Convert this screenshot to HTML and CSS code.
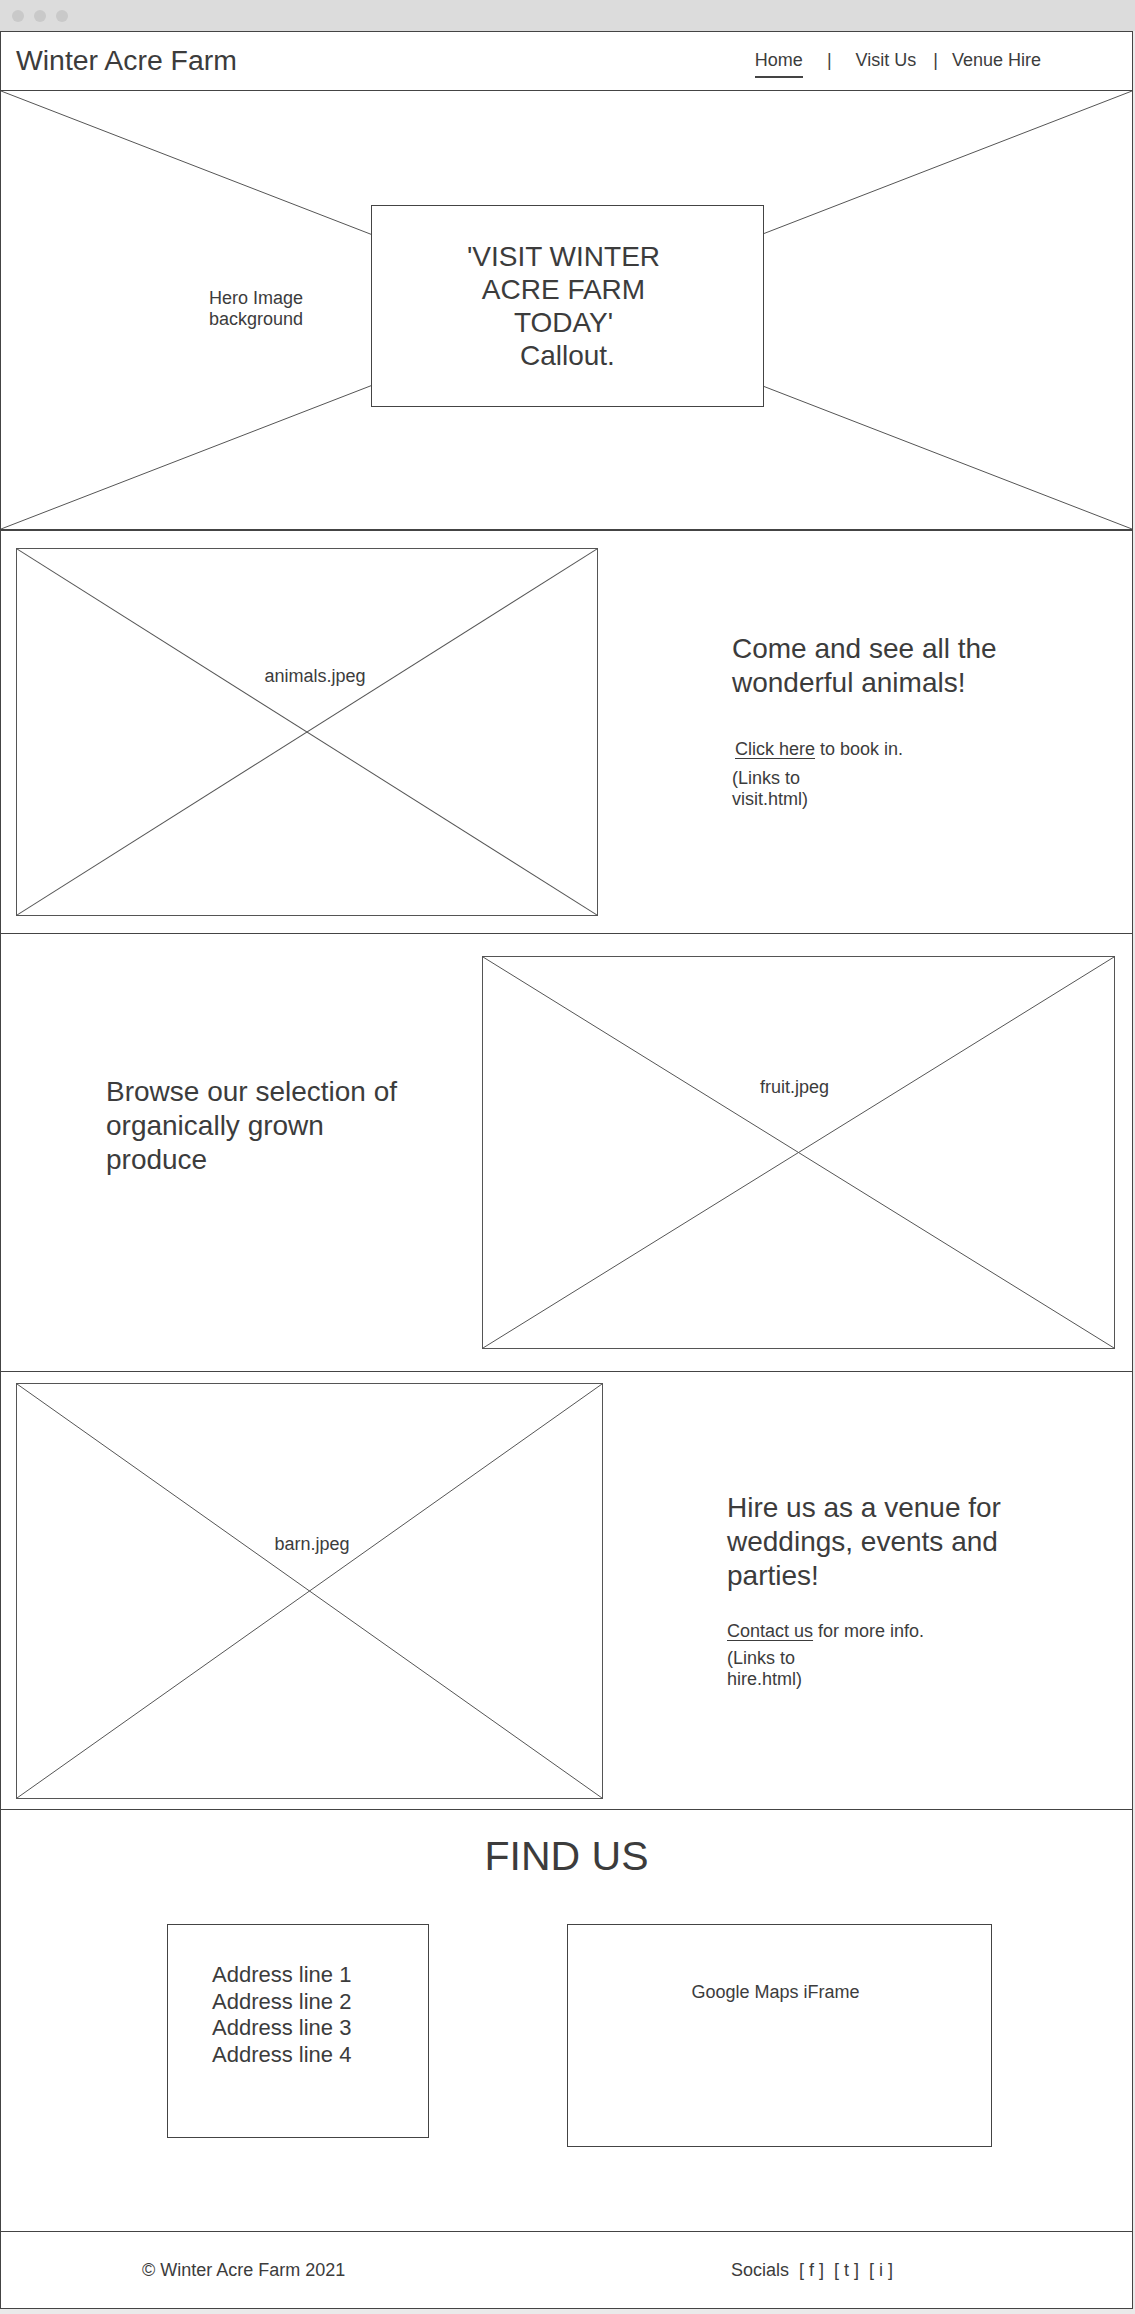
FILE: index.html
```html
<!DOCTYPE html>
<html lang="en">
<head>
  <meta charset="UTF-8" />
  <title>Winter Acre Farm - Wireframe</title>
  <link rel="stylesheet" href="styles.css">
</head>
<body>

  <div class="chrome">
    <span class="dot"></span>
    <span class="dot"></span>
    <span class="dot"></span>
  </div>

  <div class="frame">

    <header class="header">
      <div class="logo">Winter Acre Farm</div>
      <nav class="nav">
        <a href="#" class="active">Home</a>
        <span class="sep">|</span>
        <a href="#">Visit Us</a>
        <span class="sep sep-tight">|</span>
        <a href="#">Venue Hire</a>
      </nav>
    </header>

    <section class="hero">
      <svg class="cross" viewBox="0 0 100 100" preserveAspectRatio="none">
        <line x1="0" y1="0" x2="100" y2="100" />
        <line x1="100" y1="0" x2="0" y2="100" />
      </svg>
      <div class="hero-label">Hero Image<br>background</div>
      <div class="callout">
        <p>'VISIT WINTER<br>ACRE FARM<br>TODAY'<br>&nbsp;Callout.</p>
      </div>
    </section>

    <section class="row row-animals">
      <div class="placeholder ph-animals">
        <svg class="cross" viewBox="0 0 100 100" preserveAspectRatio="none">
          <line x1="0" y1="0" x2="100" y2="100" />
          <line x1="100" y1="0" x2="0" y2="100" />
        </svg>
        <span class="ph-label">animals.jpeg</span>
      </div>
      <div class="blurb blurb-animals">
        <h2>Come and see all the wonderful animals!</h2>
        <p class="cta"><a href="#">Click here</a> to book in.</p>
        <p class="note">(Links to<br>visit.html)</p>
      </div>
    </section>

    <section class="row row-fruit">
      <div class="blurb blurb-fruit">
        <h2>Browse our selection of organically grown produce</h2>
      </div>
      <div class="placeholder ph-fruit">
        <svg class="cross" viewBox="0 0 100 100" preserveAspectRatio="none">
          <line x1="0" y1="0" x2="100" y2="100" />
          <line x1="100" y1="0" x2="0" y2="100" />
        </svg>
        <span class="ph-label">fruit.jpeg</span>
      </div>
    </section>

    <section class="row row-barn">
      <div class="placeholder ph-barn">
        <svg class="cross" viewBox="0 0 100 100" preserveAspectRatio="none">
          <line x1="0" y1="0" x2="100" y2="100" />
          <line x1="100" y1="0" x2="0" y2="100" />
        </svg>
        <span class="ph-label">barn.jpeg</span>
      </div>
      <div class="blurb blurb-barn">
        <h2>Hire us as a venue for weddings, events and parties!</h2>
        <p class="cta"><a href="#">Contact us</a> for more info.</p>
        <p class="note">(Links to<br>hire.html)</p>
      </div>
    </section>

    <section class="find">
      <h1>FIND US</h1>
      <div class="find-row">
        <div class="address">
          Address line 1<br>
          Address line 2<br>
          Address line 3<br>
          Address line 4
        </div>
        <div class="map">Google Maps iFrame</div>
      </div>
    </section>

    <footer class="footer">
      <div class="copy">&copy; Winter Acre Farm 2021</div>
      <div class="socials">Socials &nbsp;[ f ] &nbsp;[ t ] &nbsp;[ i ]</div>
    </footer>

  </div>

</body>
</html>
```

FILE: styles.css
```css
body, html {
  margin: 0; padding: 0;
  background: #eaeaea;
  font-family: "Liberation Sans", Arial, sans-serif;
  color: #3c3c3c;
}
.chrome {
  height: 31px;
  background: #dcdcdc;
  display: flex;
  align-items: center;
  gap: 10px;
  padding-left: 12px;
  box-sizing: border-box;
}
.dot {
  width: 12px; height: 12px;
  border-radius: 50%;
  background: #c9c9c9;
}
.frame {
  width: 1133px;
  height: 2278px;
  box-sizing: border-box;
  border: 1px solid #444;
  background: white;
}
.header {
  height: 59px;
  box-sizing: border-box;
  border-bottom: 1px solid #444;
  display: flex;
  align-items: flex-start;
  justify-content: space-between;
  padding: 0 91px 0 15px;
}
.logo {
  font-size: 28.4px;
  line-height: 32px;
  margin-top: 12px;
}
.nav {
  display: flex;
  align-items: flex-start;
  margin-top: 18px;
  font-size: 18px;
  line-height: 21px;
}
.nav a {
  color: #3c3c3c;
  text-decoration: none;
}
.nav a.active {
  padding-bottom: 5px;
  border-bottom: 2px solid #444;
}
.sep { margin: 0 24px; }
.sep-tight { margin: 0 14px 0 17px; }

.cross {
  position: absolute;
  top: 0; left: 0;
  width: 100%; height: 100%;
}
.cross line {
  stroke: #555;
  stroke-width: 1;
  vector-effect: non-scaling-stroke;
}

.hero {
  position: relative;
  height: 440px;
  box-sizing: border-box;
  border-bottom: 2px solid #444;
  display: flex;
  align-items: center;
  padding: 0 0 8px 208px;
}
.hero-label {
  position: relative;
  width: 162px;
  margin-top: 6px;
  font-size: 18px;
  line-height: 21px;
}
.callout {
  position: relative;
  width: 393px;
  height: 202px;
  box-sizing: border-box;
  border: 1px solid #444;
  background: white;
  display: flex;
  align-items: center;
  justify-content: center;
}
.callout p {
  margin: 0;
  padding-right: 8px;
  text-align: center;
  font-size: 28px;
  line-height: 33px;
}

.row {
  display: flex;
  align-items: flex-start;
  box-sizing: border-box;
  border-bottom: 1px solid #444;
}
.row-animals { height: 403px; padding: 17px 0 0 15px; }
.row-fruit { height: 438px; padding: 22px 17px 0 105px; }
.row-barn { height: 438px; padding: 11px 0 0 15px; }

.placeholder {
  position: relative;
  box-sizing: border-box;
  border: 1px solid #555;
  text-align: center;
}
.ph-label {
  position: relative;
  display: block;
  font-size: 18px;
  line-height: 21px;
}
.ph-animals { width: 582px; height: 368px; padding: 117px 0 0 16px; }
.ph-fruit { width: 633px; height: 393px; padding: 120px 8px 0 0; margin-left: auto; }
.ph-barn { width: 587px; height: 416px; padding: 150px 0 0 5px; }

.blurb h2 {
  margin: 0;
  font-weight: normal;
  font-size: 28px;
  line-height: 34px;
}
.blurb p {
  margin: 0;
  font-size: 18px;
  line-height: 21px;
}
.blurb a {
  color: #3c3c3c;
  text-decoration: underline;
  text-underline-offset: 3px;
}
.blurb-animals { width: 300px; margin: 84px 0 0 134px; }
.blurb-animals .cta { margin: 39px 0 0 3px; }
.blurb-animals .note { margin-top: 8px; }
.blurb-fruit { width: 300px; margin-top: 119px; }
.blurb-barn { width: 300px; margin: 108px 0 0 124px; }
.blurb-barn .cta { margin-top: 28px; }
.blurb-barn .note { margin-top: 6px; }

.find {
  height: 422px;
  box-sizing: border-box;
  border-bottom: 1px solid #444;
  padding-top: 22px;
}
.find h1 {
  margin: 0;
  text-align: center;
  font-weight: normal;
  font-size: 41px;
  line-height: 48px;
}
.find-row {
  display: flex;
  align-items: flex-start;
  gap: 138px;
  margin-top: 44px;
  padding-left: 166px;
}
.address {
  width: 262px;
  height: 214px;
  box-sizing: border-box;
  border: 1px solid #444;
  padding: 37px 0 0 44px;
  font-size: 22px;
  line-height: 26.5px;
}
.map {
  width: 425px;
  height: 223px;
  box-sizing: border-box;
  border: 1px solid #444;
  padding: 56px 8px 0 0;
  text-align: center;
  font-size: 18px;
  line-height: 22px;
}

.footer {
  height: 76px;
  display: flex;
  align-items: center;
  padding-left: 141px;
  font-size: 18px;
}
.copy { width: 589px; }
```
